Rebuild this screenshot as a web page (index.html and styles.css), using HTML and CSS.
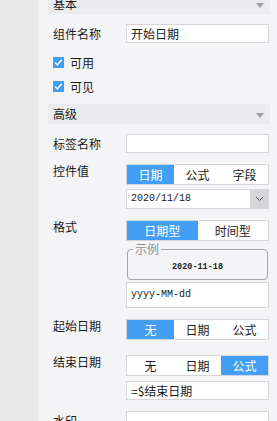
FILE: index.html
```html
<!DOCTYPE html>
<html>
<head>
    <title>控件属性</title>
    <link rel="stylesheet" href="styles.css">
</head>
<body>
    <div class="side"></div>
    <div class="panel">
        <div class="section-head first">
            <span>基本</span>
            <span class="caret"></span>
        </div>

        <div class="row gap-10">
            <div class="label boxed">组件名称</div>
            <div class="field"><div class="text-input">开始日期</div></div>
        </div>

        <div class="check-row first-check">
            <span class="check"><svg width="11" height="11" viewBox="0 0 11 11"><path d="M2.2 5.6 L4.4 7.9 L8.8 2.8" fill="none" stroke="#fff" stroke-width="1.4"/></svg></span>
            <span>可用</span>
        </div>
        <div class="check-row">
            <span class="check"><svg width="11" height="11" viewBox="0 0 11 11"><path d="M2.2 5.6 L4.4 7.9 L8.8 2.8" fill="none" stroke="#fff" stroke-width="1.4"/></svg></span>
            <span>可见</span>
        </div>

        <div class="section-head second">
            <span>高级</span>
            <span class="caret"></span>
        </div>

        <div class="row gap-10">
            <div class="label boxed">标签名称</div>
            <div class="field"><div class="text-input"></div></div>
        </div>

        <div class="row gap-11">
            <div class="label">控件值</div>
            <div class="field">
                <div class="seg">
                    <button class="active">日期</button>
                    <button>公式</button>
                    <button>字段</button>
                </div>
                <div class="select">
                    <span class="select-text">2020/11/18</span>
                    <span class="select-btn"><svg width="9" height="6" viewBox="0 0 9 6"><path d="M1 1 L4.5 4.5 L8 1" fill="none" stroke="#555" stroke-width="1"/></svg></span>
                </div>
            </div>
        </div>

        <div class="row gap-11">
            <div class="label">格式</div>
            <div class="field">
                <div class="seg">
                    <button class="active">日期型</button>
                    <button>时间型</button>
                </div>
                <fieldset class="sample">
                    <legend>示例</legend>
                    <div class="sample-text">2020-11-18</div>
                </fieldset>
                <div class="text-input tall mono">yyyy-MM-dd</div>
            </div>
        </div>

        <div class="row gap-11">
            <div class="label">起始日期</div>
            <div class="field">
                <div class="seg">
                    <button class="active">无</button>
                    <button>日期</button>
                    <button>公式</button>
                </div>
            </div>
        </div>

        <div class="row gap-15">
            <div class="label">结束日期</div>
            <div class="field">
                <div class="seg">
                    <button>无</button>
                    <button>日期</button>
                    <button class="active">公式</button>
                </div>
                <div class="text-input formula">=$结束日期</div>
            </div>
        </div>

        <div class="row gap-11">
            <div class="label boxed">水印</div>
            <div class="field"><div class="text-input"></div></div>
        </div>
    </div>
</body>
</html>
```

FILE: styles.css
```css
:root {
    --blue: #439ff6;
    --line: #d6d6da;
    --panel-bg: #f4f4f6;
    --head-bg: #ebebed;
    --text: #1a1a1a;
}

* {
    margin: 0;
    padding: 0;
    box-sizing: border-box;
}

body {
    width: 277px;
    height: 421px;
    overflow: hidden;
    display: flex;
    font-family: "Noto Sans CJK SC", "Noto Sans", sans-serif;
    font-size: 12px;
    color: var(--text);
    background: var(--panel-bg);
}

.side {
    width: 38px;
    flex-shrink: 0;
    background: #e8e8e8;
}

.panel {
    flex: 1;
    padding: 0 7px 0 10px;
    background: var(--panel-bg);
}

.section-head {
    height: 20px;
    background: var(--head-bg);
    display: flex;
    align-items: center;
    justify-content: space-between;
    padding: 0 6px 0 5px;
    line-height: 20px;
}

.section-head.first {
    margin-top: -6px;
}

.section-head.second {
    margin-top: 6px;
}

.caret {
    width: 0;
    height: 0;
    border-left: 4px solid transparent;
    border-right: 4px solid transparent;
    border-top: 5px solid #a0a0a4;
    margin-top: 2px;
}

.row {
    display: grid;
    grid-template-columns: 78px 143px;
}

.gap-10 { margin-top: 10px; }
.gap-11 { margin-top: 11px; }
.gap-15 { margin-top: 15px; }

.label {
    padding-left: 5px;
    line-height: 14px;
    white-space: nowrap;
}

.label.boxed {
    padding-top: 3px;
}

.field {
    display: flex;
    flex-direction: column;
}

.text-input {
    height: 19px;
    background: #fff;
    border: 1px solid var(--line);
    padding-left: 4px;
    line-height: 17px;
    white-space: nowrap;
}

.text-input.tall {
    height: 26px;
    margin-top: 2px;
    line-height: 24px;
}

.text-input.mono {
    font-family: "Liberation Mono", monospace;
    font-size: 10px;
}

.text-input.formula {
    height: 19px;
    margin-top: 5px;
}

.check-row {
    height: 24px;
    display: flex;
    align-items: center;
    gap: 6px;
    padding-left: 5px;
}

.first-check {
    margin-top: 7px;
}

.check {
    width: 11px;
    height: 11px;
    background: var(--blue);
    display: flex;
}

.seg {
    display: flex;
    height: 21px;
    background: #fff;
    border: 1px solid var(--line);
}

.seg button {
    flex: 1;
    border: none;
    background: transparent;
    font: inherit;
    color: var(--text);
    line-height: 19px;
}

.seg button.active {
    background: var(--blue);
    color: #fff;
}

.select {
    display: flex;
    height: 20px;
    margin-top: 4px;
    background: #fff;
    border: 1px solid var(--line);
}

.select-text {
    flex: 1;
    padding-left: 4px;
    font-family: "Liberation Mono", monospace;
    font-size: 10px;
    line-height: 18px;
}

.select-btn {
    width: 18px;
    background: #d6d6da;
    display: flex;
    align-items: center;
    justify-content: center;
}

.sample {
    margin: 2px 1px 0;
    height: 37px;
    border: 1px solid #a4a4a8;
    border-radius: 4px;
    padding: 0 4px;
}

.sample legend {
    margin-left: 1px;
    padding: 0 2px;
    color: #909094;
    line-height: 12px;
}

.sample-text {
    text-align: center;
    font-family: "Liberation Mono", monospace;
    font-size: 8.5px;
    font-weight: bold;
    color: #222;
    line-height: 12px;
    margin-top: 6px;
}
```
